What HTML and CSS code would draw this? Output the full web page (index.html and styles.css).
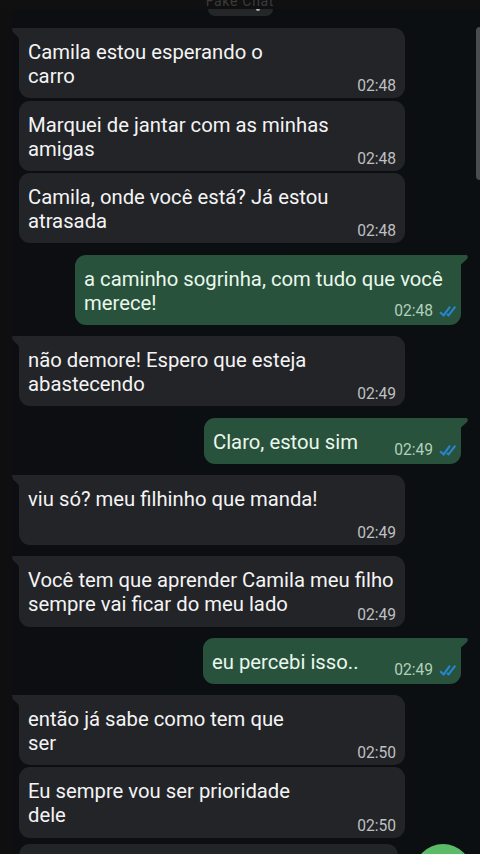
FILE: index.html
```html
<!DOCTYPE html>
<html lang="pt-BR">
<head>
<meta charset="utf-8">
<meta name="viewport" content="width=device-width, initial-scale=1">
<title>Chat</title>
<link rel="stylesheet" href="styles.css">
</head>
<body>
<svg class="defs" aria-hidden="true">
  <symbol id="checks" viewBox="0 0 18 12"><path d="M1 7.2 4.7 10.4 11 1.6M7.8 9.1 9.6 10.4 16.3 1.6" fill="none" stroke="#2585d0" stroke-width="2.1"/></symbol>
  <symbol id="tail" viewBox="0 0 16 18"><path d="M0 0H16V18H7V12Q7 9.500 5 8L1.500 5Q0 3.500 0 0Z" fill="currentColor"/></symbol>
  <symbol id="tail-out" viewBox="0 0 16 18"><path d="M0 0H14.500Q17 1 15 4L9 9.500V18H0Z" fill="currentColor"/></symbol>
</svg>
<main class="chat">
  <div class="brand">Fake Chat</div>
  <div class="day"></div>
  <section class="messages">
    <article class="msg in first"><svg class="tail"><use href="#tail"/></svg><p>Camila estou esperando o<br>carro</p><time>02:48</time></article>
    <article class="msg in"><p>Marquei de jantar com as minhas<br>amigas</p><time>02:48</time></article>
    <article class="msg in"><p>Camila, onde você está? Já estou<br>atrasada</p><time>02:48</time></article>
    <article class="msg out wide"><svg class="tail"><use href="#tail-out"/></svg><p>a caminho sogrinha, com tudo que você<br>merece!</p><time>02:48<svg class="checks"><use href="#checks"/></svg></time></article>
    <article class="msg in first"><svg class="tail"><use href="#tail"/></svg><p>não demore! Espero que esteja<br>abastecendo</p><time>02:49</time></article>
    <article class="msg out short"><svg class="tail"><use href="#tail-out"/></svg><p>Claro, estou sim</p><time>02:49<svg class="checks"><use href="#checks"/></svg></time></article>
    <article class="msg in first"><svg class="tail"><use href="#tail"/></svg><p>viu só? meu filhinho que manda!</p><time>02:49</time></article>
    <article class="msg in first"><svg class="tail"><use href="#tail"/></svg><p>Você tem que aprender Camila meu filho<br>sempre vai ficar do meu lado</p><time>02:49</time></article>
    <article class="msg out short last"><svg class="tail"><use href="#tail-out"/></svg><p>eu percebi isso..</p><time>02:49<svg class="checks"><use href="#checks"/></svg></time></article>
    <article class="msg in first"><svg class="tail"><use href="#tail"/></svg><p>então já sabe como tem que<br>ser</p><time>02:50</time></article>
    <article class="msg in"><p>Eu sempre vou ser prioridade<br>dele</p><time>02:50</time></article>
    <article class="msg in next"></article>
  </section>
  <div class="scrollbar"></div>
  <div class="fab"></div>
</main>
</body>
</html>
```

FILE: styles.css
```css
* { box-sizing: border-box; }
body { margin: 0; background: #0c0e11; }
.defs { position: absolute; width: 0; height: 0; }
.chat {
  position: relative;
  height: 854px;
  overflow: hidden;
  background: linear-gradient(90deg, #0f0f0f 12px, #0c0e12 13px, #0b0f12);
  font-family: Roboto, sans-serif;
}
.brand {
  height: 9px;
  display: flex;
  align-items: flex-end;
  justify-content: center;
  line-height: 16px;
  font-size: 14px;
  letter-spacing: 0.7px;
  color: #3b3b3b;
  background: #101010;
}
.day {
  position: relative;
  width: 65px;
  height: 7px;
  margin: 0 0 12.2px 208px;
  background: #252627;
  border-radius: 0 0 8px 8px;
}
.day::after {
  content: "";
  position: absolute;
  left: 48px;
  top: 0;
  width: 4px;
  height: 2px;
  border-radius: 0 0 2px 2px;
  background: #b8b8b8;
}
.messages { display: flex; flex-direction: column; }
.msg {
  position: relative;
  width: 386px;
  height: 70.3px;
  margin: 2.2px 0 0 19px;
  padding: 12px 9px 0;
  border-radius: 11px;
}
.in { background: #232427; color: #f4f4f5; }
.first { margin-top: 11.2px; border-top-left-radius: 0; }
.first:first-child { margin-top: 0; }
.out {
  align-self: flex-end;
  margin: 11.2px 19px 0 0;
  background: #29523c;
  color: #e9f8ed;
  border-top-right-radius: 0;
}
.short { width: 257px; height: 46px; }
.last { width: 258px; }
.next { width: 379px; margin-top: 6.5px; }
.msg p {
  margin: 0;
  font-size: 20.27px;
  line-height: 24px;
  white-space: nowrap;
}
.msg time {
  position: absolute;
  right: 9px;
  bottom: 3px;
  display: flex;
  align-items: center;
  font-size: 15.6px;
  line-height: 18px;
  color: #bfc0c2;
}
.out time { right: 4px; bottom: 5px; color: #b0d0ba; }
.checks { width: 18px; height: 12px; margin: 1px 0 0 6px; }
.tail { position: absolute; top: 0; width: 16px; height: 18px; }
.in .tail { left: -7px; color: #232427; }
.out .tail { right: -7px; color: #29523c; }
.scrollbar {
  position: absolute;
  top: 27px;
  right: 0;
  width: 4px;
  height: 153px;
  background: #4a4d50;
  border-radius: 4px 0 0 4px;
}
.fab {
  position: absolute;
  left: 414px;
  top: 843.5px;
  width: 58px;
  height: 58px;
  border-radius: 50%;
  background: #5bbb69;
}
```
